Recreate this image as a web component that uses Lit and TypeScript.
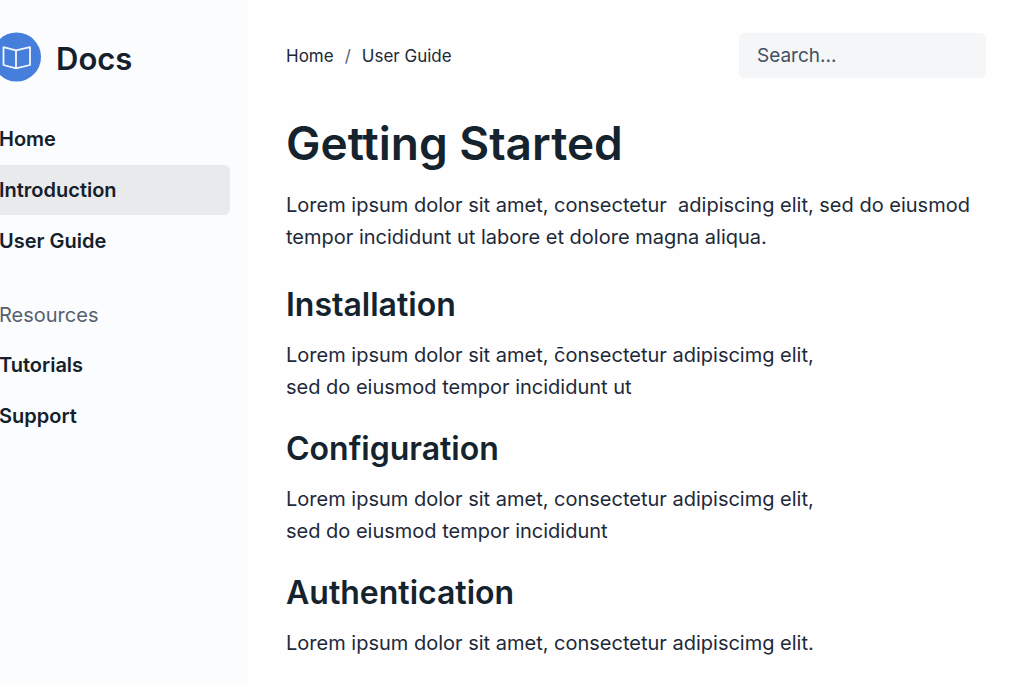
import { LitElement, html, css } from "lit";
import { customElement } from "lit/decorators.js";

interface NavItem {
  label: string;
  current?: boolean;
}

const mainLinks: NavItem[] = [
  { label: "Home" },
  { label: "Introduction", current: true },
  { label: "User Guide" },
];

const resourceLinks: NavItem[] = [{ label: "Tutorials" }, { label: "Support" }];

const sections = [
  {
    title: "Installation",
    lines: [
      "Lorem ipsum dolor sit amet, c\u0304onsectetur adipiscimg elit,",
      "sed do eiusmod tempor incididunt ut",
    ],
  },
  {
    title: "Configuration",
    lines: [
      "Lorem ipsum dolor sit amet, consectetur adipiscimg elit,",
      "sed do eiusmod tempor incididunt",
    ],
  },
  {
    title: "Authentication",
    lines: ["Lorem ipsum dolor sit amet, consectetur adipiscimg elit."],
  },
];

@customElement("docs-sidebar")
export class DocsSidebar extends LitElement {
  static styles = css`
    :host {
      display: block;
      box-sizing: border-box;
      overflow: hidden;
      padding: 32px 18px 32px 0;
      background: #fafcfe;
      color: #14202b;
    }
    .brand {
      display: flex;
      align-items: center;
      gap: 14px;
      height: 50px;
      margin: 0 0 32px -8px;
      color: inherit;
      text-decoration: none;
      font-size: 31px;
      line-height: 50px;
      font-weight: 600;
    }
    .name {
      padding-top: 3px;
    }
    .logo {
      flex: none;
      width: 50px;
      height: 50px;
    }
    .list {
      display: grid;
      gap: 1px;
      margin: 0;
      padding: 0;
      list-style: none;
    }
    .link {
      display: block;
      margin-left: -12px;
      padding: 9px 11px;
      border-radius: 6px;
      color: inherit;
      text-decoration: none;
      font-size: 20px;
      line-height: 32px;
      font-weight: 600;
      white-space: nowrap;
    }
    .current {
      background: #e9eaec;
    }
    .group {
      margin: 24px 0 0 -12px;
      padding: 9px 11px;
      color: #566070;
      font-size: 20px;
      line-height: 32px;
      font-weight: 400;
    }
  `;

  private links(items: NavItem[]) {
    return html`<ul class="list">
      ${items.map(
        (item) => html`<li>
          <a
            class=${item.current ? "link current" : "link"}
            href="#"
            aria-current=${item.current ? "page" : "false"}
            >${item.label}</a
          >
        </li>`
      )}
    </ul>`;
  }

  render() {
    return html`
      <a class="brand" href="#">
        <svg class="logo" viewBox="0 0 50 50" aria-hidden="true">
          <circle cx="24.5" cy="25" r="24.5" fill="#467edb" />
          <path
            d="M11.5 15.2 L24 18.4 L38 15.2 V33 L24 36.4 L11.5 33 Z M24 18.4 V36.4"
            fill="none"
            stroke="#f4f8fe"
            stroke-width="1.8"
            stroke-linejoin="round"
          />
        </svg>
        <span class="name">Docs</span>
      </a>
      <nav aria-label="Documentation">
        ${this.links(mainLinks)}
        <h2 class="group">Resources</h2>
        ${this.links(resourceLinks)}
      </nav>
    `;
  }
}

@customElement("app-root")
export class AppRoot extends LitElement {
  static styles = css`
    :host {
      display: grid;
      grid-template-columns: 248px minmax(0, 1fr);
      min-height: 100vh;
      background: #fefefe;
      color: #1d2939;
      font-family: Inter, "Liberation Sans", sans-serif;
    }
    .main {
      padding: 33px 38px 24px;
    }
    .top {
      display: flex;
      align-items: center;
      justify-content: space-between;
      gap: 24px;
    }
    .crumbs {
      display: flex;
      gap: 11px;
      margin: 0;
      padding: 0;
      list-style: none;
      font-size: 17px;
      line-height: 32px;
    }
    .crumb {
      color: inherit;
      text-decoration: none;
    }
    .slash {
      color: #566070;
    }
    .search {
      box-sizing: border-box;
      width: 247px;
      height: 45px;
      padding: 0 18px;
      border: 0;
      border-radius: 5px;
      background: #f5f6f8;
      color: #1d2939;
      font: inherit;
      font-size: 19px;
    }
    .search::placeholder {
      color: #435061;
      opacity: 1;
    }
    .title,
    .heading {
      color: #14232e;
      font-weight: 600;
    }
    .title {
      margin: 35px 0 16px;
      font-size: 46px;
      line-height: 60px;
    }
    .heading {
      margin: 26px 0 14px;
      font-size: 32px;
      line-height: 40px;
    }
    .text {
      margin: 0;
      font-size: 20px;
      line-height: 32px;
    }
    .intro {
      margin-bottom: 32px;
    }
    .line {
      display: block;
    }
  `;

  render() {
    return html`
      <docs-sidebar></docs-sidebar>
      <main class="main">
        <header class="top">
          <nav aria-label="Breadcrumb">
            <ol class="crumbs">
              <li><a class="crumb" href="#">Home</a></li>
              <li class="slash" aria-hidden="true">/</li>
              <li><a class="crumb" href="#">User Guide</a></li>
            </ol>
          </nav>
          <input
            class="search"
            type="search"
            placeholder="Search..."
            aria-label="Search"
          />
        </header>
        <h1 class="title">Getting Started</h1>
        <p class="text intro">
          <span class="line"
            >Lorem ipsum dolor sit amet, consectetur&nbsp; adipiscing elit, sed
            do eiusmod</span
          >
          <span class="line">tempor incididunt ut labore et dolore magna aliqua.</span>
        </p>
        ${sections.map(
          (section) => html`<section>
            <h2 class="heading">${section.title}</h2>
            <p class="text">
              ${section.lines.map(
                (line) => html`<span class="line">${line}</span>`
              )}
            </p>
          </section>`
        )}
      </main>
    `;
  }
}
